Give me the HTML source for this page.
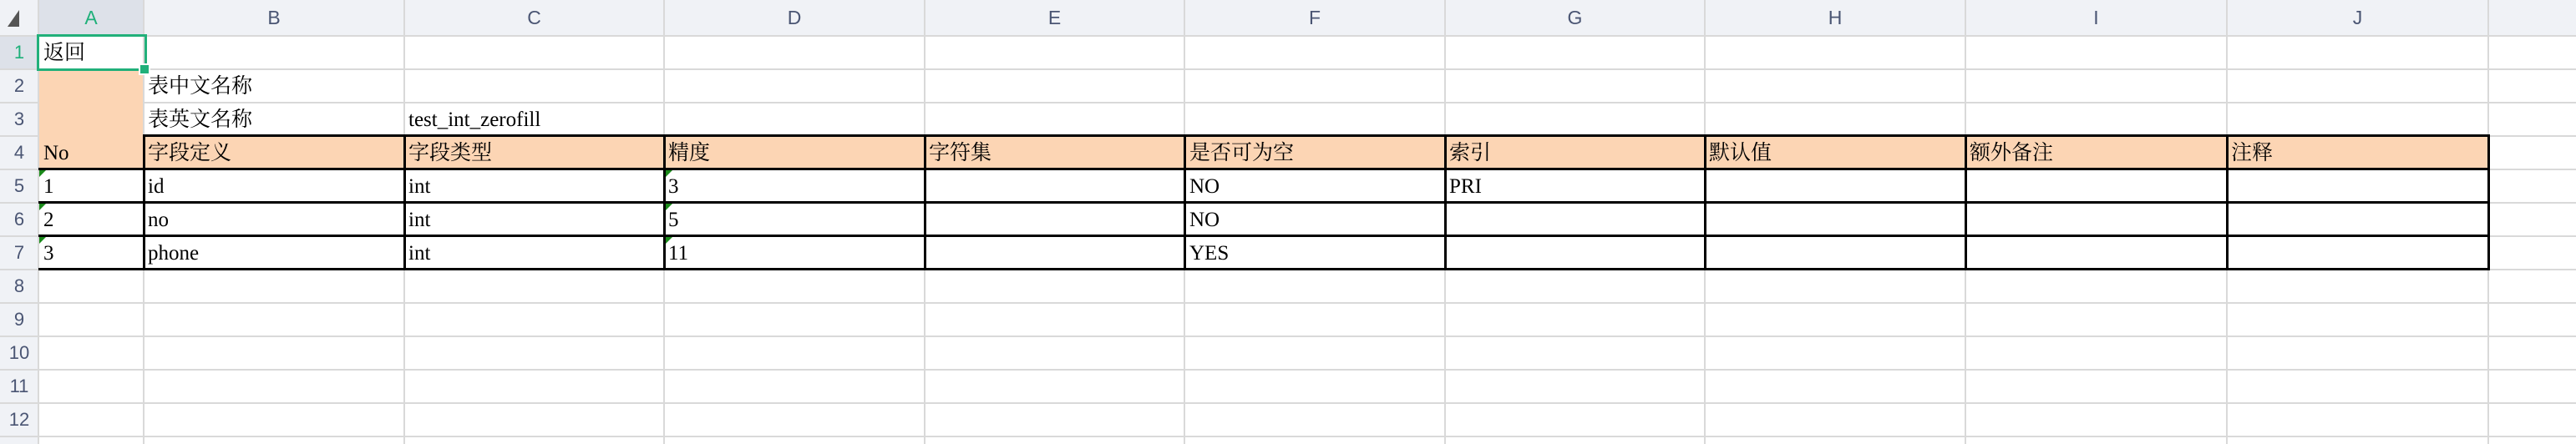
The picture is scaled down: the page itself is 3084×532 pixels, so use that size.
<!DOCTYPE html>
<html><head><meta charset="utf-8"><style>
body{margin:0;width:3084px;height:532px;overflow:hidden;background:#fff;position:relative;font-family:"Liberation Serif","Noto Serif CJK SC",serif}
.a{position:absolute}
.hl{position:absolute;height:2px;background:#d9d9d9}
.vl{position:absolute;width:2px;background:#d9d9d9}
.ch{position:absolute;top:0;height:43px;line-height:43px;text-align:center;font-family:"Liberation Sans",sans-serif;font-size:23px;color:#4a5573}
.rh{position:absolute;left:0;width:46px;text-align:center;font-family:"Liberation Sans",sans-serif;font-size:22px;color:#4a5573;line-height:40px}
.t{position:absolute;font-size:25px;color:#000;white-space:nowrap;line-height:25px}
.tri{position:absolute;width:0;height:0;border-top:8px solid #1a8a1a;border-right:8px solid transparent}
</style></head><body>
<div class="a" style="left:0;top:0;width:3084px;height:43px;background:#f0f2f6"></div>
<div class="a" style="left:0;top:0;width:46px;height:532px;background:#f0f2f6"></div>
<div class="a" style="left:46px;top:0;width:126px;height:43px;background:#dde1e9"></div>
<div class="a" style="left:0;top:43px;width:46px;height:40px;background:#dde1e9"></div>
<div class="a" style="left:9px;top:12px;width:0;height:0;border-left:14px solid transparent;border-bottom:20px solid #555"></div>
<div id="g"></div>
<div class="ch" style="left:46px;width:126px;color:#1fb07a">A</div>
<div class="ch" style="left:172px;width:312px">B</div>
<div class="ch" style="left:484px;width:311px">C</div>
<div class="ch" style="left:795px;width:312px">D</div>
<div class="ch" style="left:1107px;width:311px">E</div>
<div class="ch" style="left:1418px;width:312px">F</div>
<div class="ch" style="left:1730px;width:311px">G</div>
<div class="ch" style="left:2041px;width:312px">H</div>
<div class="ch" style="left:2353px;width:313px">I</div>
<div class="ch" style="left:2666px;width:313px">J</div>
<div class="rh" style="top:43px;color:#1fb07a">1</div>
<div class="rh" style="top:83px">2</div><div class="rh" style="top:123px">3</div><div class="rh" style="top:163px">4</div>
<div class="rh" style="top:203px">5</div><div class="rh" style="top:243px">6</div><div class="rh" style="top:283px">7</div>
<div class="rh" style="top:323px">8</div><div class="rh" style="top:363px">9</div><div class="rh" style="top:403px">10</div>
<div class="rh" style="top:443px">11</div><div class="rh" style="top:483px">12</div>
<script>
var g=document.getElementById('g'),h='';
var xs=[46,172,484,795,1107,1418,1730,2041,2353,2666,2979];
for(var i=0;i<13;i++){h+='<div class="hl" style="left:0;width:3084px;top:'+(42+40*i)+'px"></div>';}
for(var j=0;j<xs.length;j++){h+='<div class="vl" style="top:0;height:532px;left:'+(xs[j]-1)+'px"></div>';}
h+='<div class="vl" style="top:0;height:532px;left:3084px"></div>';
h+='<div class="a" style="left:47px;top:83px;width:124px;height:80px;background:#fcd5b4"></div>';
h+='<div class="a" style="left:47px;top:163px;width:124px;height:40px;background:#fcd5b4"></div>';
h+='<div class="a" style="left:172px;top:163px;width:2807px;height:40px;background:#fcd5b4"></div>';
function bl(x,y,w,hh){return '<div class="a" style="background:#000;left:'+x+'px;top:'+y+'px;width:'+w+'px;height:'+hh+'px"></div>';}
h+=bl(171,161,2810,3);
for(var r=0;r<3;r++)h+=bl(46,201+40*r,2935,3);
h+=bl(46,321,2935,3);
for(var j=1;j<xs.length;j++)h+=bl(xs[j]-1,161,3,163);
g.innerHTML=h;
</script>
<div class="a" style="left:44px;top:41px;width:126px;height:38px;border:3px solid #21b07a"></div>
<div class="a" style="left:166px;top:76px;width:10px;height:10px;background:#21b07a;border:2px solid #fff"></div>
<div class="tri" style="left:47px;top:204px"></div><div class="tri" style="left:47px;top:244px"></div><div class="tri" style="left:47px;top:284px"></div>
<div class="tri" style="left:797px;top:204px"></div><div class="tri" style="left:797px;top:244px"></div><div class="tri" style="left:797px;top:284px"></div>
<div class="t" style="left:52px;top:51px">返回</div>
<div class="t" style="left:177px;top:91px">表中文名称</div>
<div class="t" style="left:177px;top:131px">表英文名称</div>
<div class="t" style="left:489px;top:131px">test_int_zerofill</div>
<div class="t" style="left:52px;top:171px">No</div>
<div class="t" style="left:177px;top:171px">字段定义</div>
<div class="t" style="left:489px;top:171px">字段类型</div>
<div class="t" style="left:800px;top:171px">精度</div>
<div class="t" style="left:1112px;top:171px">字符集</div>
<div class="t" style="left:1424px;top:171px">是否可为空</div>
<div class="t" style="left:1735px;top:171px">索引</div>
<div class="t" style="left:2046px;top:171px">默认值</div>
<div class="t" style="left:2358px;top:171px">额外备注</div>
<div class="t" style="left:2671px;top:171px">注释</div>
<div class="t" style="left:52px;top:211px">1</div><div class="t" style="left:177px;top:211px">id</div><div class="t" style="left:489px;top:211px">int</div><div class="t" style="left:800px;top:211px">3</div><div class="t" style="left:1424px;top:211px">NO</div><div class="t" style="left:1735px;top:211px">PRI</div>
<div class="t" style="left:52px;top:251px">2</div><div class="t" style="left:177px;top:251px">no</div><div class="t" style="left:489px;top:251px">int</div><div class="t" style="left:800px;top:251px">5</div><div class="t" style="left:1424px;top:251px">NO</div>
<div class="t" style="left:52px;top:291px">3</div><div class="t" style="left:177px;top:291px">phone</div><div class="t" style="left:489px;top:291px">int</div><div class="t" style="left:800px;top:291px">11</div><div class="t" style="left:1424px;top:291px">YES</div>
</body></html>
